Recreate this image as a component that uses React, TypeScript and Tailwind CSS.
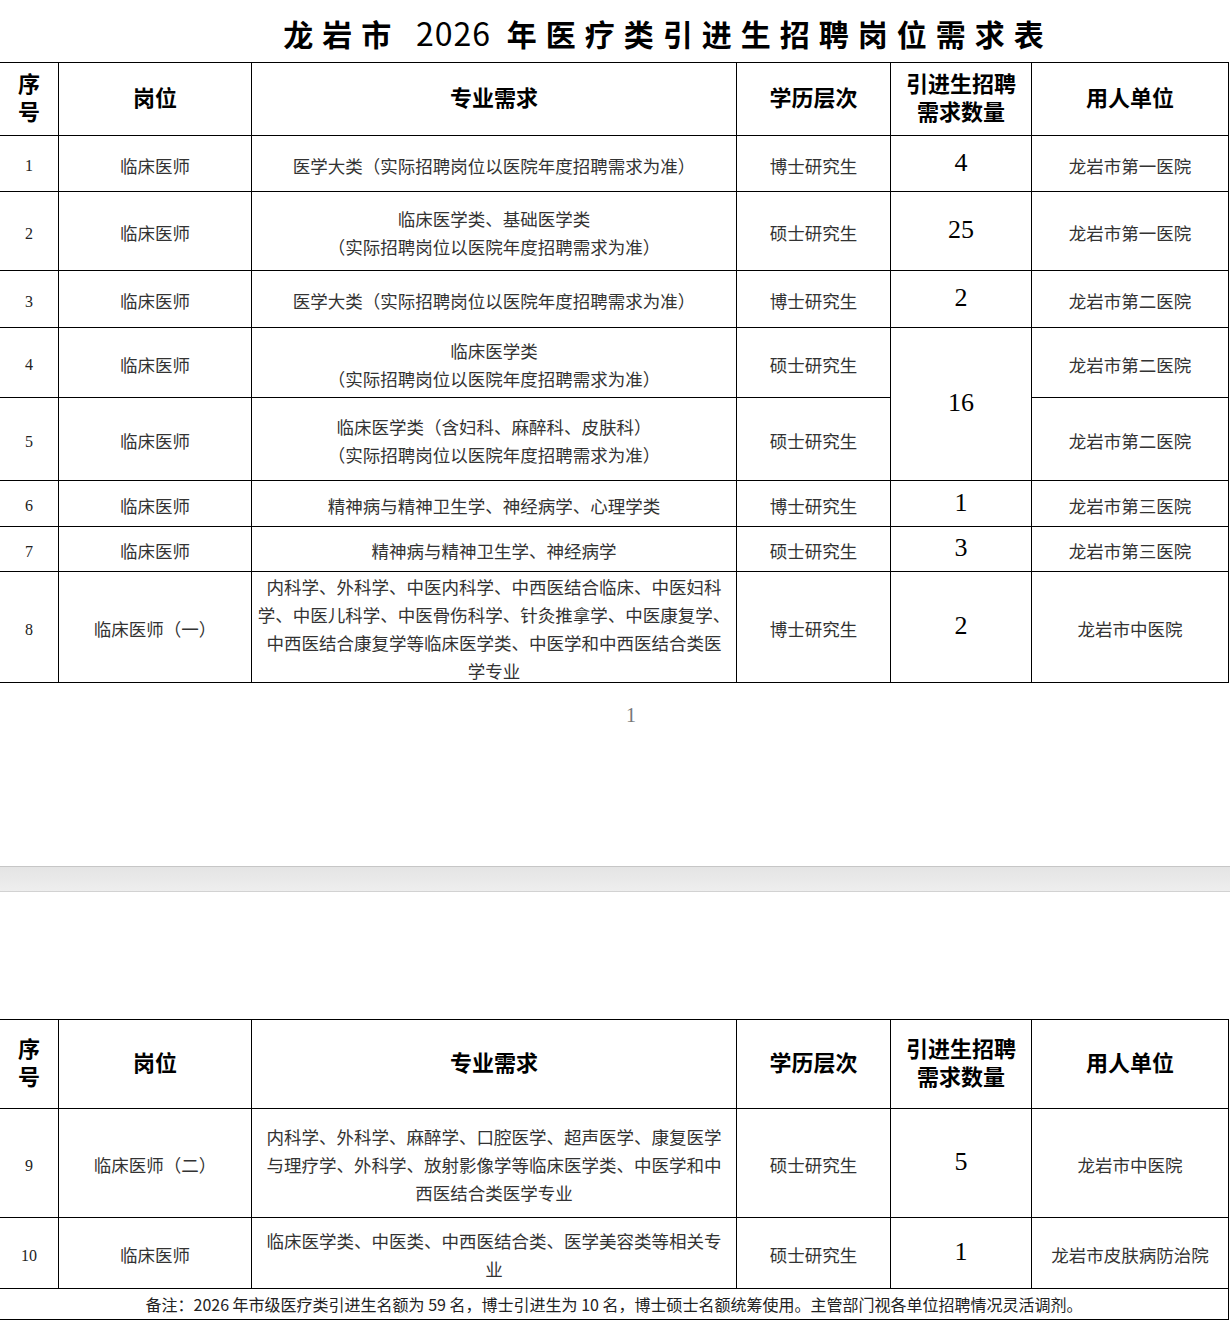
import React from "react";

type CP = { children?: React.ReactNode; className?: string };

const Cell = ({ children, className = "" }: CP) => (
  <div className={`bg-white flex items-center justify-center text-center ${className}`}>{children}</div>
);

const H = ({ children, className = "" }: CP) => (
  <Cell className={`font-bold text-[22px] leading-[28px] text-black ${className}`}>{children}</Cell>
);

const T = ({ children, className = "" }: CP) => (
  <Cell className={`text-[17.5px] leading-[28px] text-[#333] pt-[6px] ${className}`}>{children}</Cell>
);

const Seq = ({ children }: CP) => <Cell className="text-[16px] text-[#222] pt-[5px]">{children}</Cell>;
const Num = ({ children, className = "" }: CP) => (
  <Cell className={`text-[26px] leading-[30px] text-black pb-[2px] ${className}`}>{children}</Cell>
);

const Header = () => (
  <>
    <H>
      序<br />号
    </H>
    <H>岗位</H>
    <H>专业需求</H>
    <H>学历层次</H>
    <H>
      引进生招聘
      <br />
      需求数量
    </H>
    <H>用人单位</H>
  </>
);

export default function App() {
  return (
    <div className="w-[1230px] h-[1322px] overflow-hidden bg-white font-['Liberation_Serif','Noto_Sans_CJK_SC',serif]">
      <div className="h-[62px] flex items-center justify-center pl-[106px]">
        <div className="font-['Noto_Sans_CJK_SC',sans-serif] font-bold text-[30px] tracking-[9px] text-black leading-none pt-[2px] whitespace-nowrap">
          龙岩市 <span className="tracking-[1px] font-normal text-[32px]">2026</span> 年医疗类引进生招聘岗位需求表
        </div>
      </div>

      <div className="ml-[-1px] w-[1230px] grid grid-cols-[58px_192px_484px_153px_140px_196px] grid-rows-[72px_55px_78px_56px_69px_82px_45px_44px_110px] gap-px p-px bg-black">
        <Header />

        <Seq>1</Seq>
        <T>临床医师</T>
        <T>医学大类（实际招聘岗位以医院年度招聘需求为准）</T>
        <T>博士研究生</T>
        <Num>4</Num>
        <T>龙岩市第一医院</T>

        <Seq>2</Seq>
        <T>临床医师</T>
        <T>
          临床医学类、基础医学类
          <br />
          （实际招聘岗位以医院年度招聘需求为准）
        </T>
        <T>硕士研究生</T>
        <Num>25</Num>
        <T>龙岩市第一医院</T>

        <Seq>3</Seq>
        <T>临床医师</T>
        <T>医学大类（实际招聘岗位以医院年度招聘需求为准）</T>
        <T>博士研究生</T>
        <Num>2</Num>
        <T>龙岩市第二医院</T>

        <Seq>4</Seq>
        <T>临床医师</T>
        <T>
          临床医学类
          <br />
          （实际招聘岗位以医院年度招聘需求为准）
        </T>
        <T>硕士研究生</T>
        <Num className="row-span-2">16</Num>
        <T>龙岩市第二医院</T>

        <Seq>5</Seq>
        <T>临床医师</T>
        <T>
          临床医学类（含妇科、麻醉科、皮肤科）
          <br />
          （实际招聘岗位以医院年度招聘需求为准）
        </T>
        <T>硕士研究生</T>
        <T>龙岩市第二医院</T>

        <Seq>6</Seq>
        <T>临床医师</T>
        <T>精神病与精神卫生学、神经病学、心理学类</T>
        <T>博士研究生</T>
        <Num>1</Num>
        <T>龙岩市第三医院</T>

        <Seq>7</Seq>
        <T>临床医师</T>
        <T>精神病与精神卫生学、神经病学</T>
        <T>硕士研究生</T>
        <Num>3</Num>
        <T>龙岩市第三医院</T>

        <Seq>8</Seq>
        <T>临床医师（一）</T>
        <T className="whitespace-nowrap">
          内科学、外科学、中医内科学、中西医结合临床、中医妇科
          <br />
          学、中医儿科学、中医骨伤科学、针灸推拿学、中医康复学、
          <br />
          中西医结合康复学等临床医学类、中医学和中西医结合类医
          <br />
          学专业
        </T>
        <T>博士研究生</T>
        <Num>2</Num>
        <T>龙岩市中医院</T>
      </div>

      <div className="h-[183px] pt-[20px] pl-[32px] text-center text-[20px] leading-[24px] text-[#777]">1</div>

      <div className="h-[26px] border-t border-b border-t-[#c6c6c6] border-b-[#d2d2d2] bg-gradient-to-b from-[#e4e4e4] to-[#eeeeee]" />

      <div className="h-[127px]" />

      <div className="ml-[-1px] w-[1230px] grid grid-cols-[58px_192px_484px_153px_140px_196px] grid-rows-[88px_108px_70px_30px] gap-px p-px bg-black">
        <Header />

        <Seq>9</Seq>
        <T>临床医师（二）</T>
        <T className="whitespace-nowrap">
          内科学、外科学、麻醉学、口腔医学、超声医学、康复医学
          <br />
          与理疗学、外科学、放射影像学等临床医学类、中医学和中
          <br />
          西医结合类医学专业
        </T>
        <T>硕士研究生</T>
        <Num>5</Num>
        <T>龙岩市中医院</T>

        <Seq>10</Seq>
        <T>临床医师</T>
        <T className="whitespace-nowrap">
          临床医学类、中医类、中西医结合类、医学美容类等相关专
          <br />
          业
        </T>
        <T>硕士研究生</T>
        <Num>1</Num>
        <T>龙岩市皮肤病防治院</T>

        <Cell className="col-span-6 text-[16px] text-[#222] font-['Noto_Sans_CJK_SC',sans-serif]">
          备注：2026 年市级医疗类引进生名额为 59 名，博士引进生为 10 名，博士硕士名额统筹使用。主管部门视各单位招聘情况灵活调剂。
        </Cell>
      </div>
    </div>
  );
}
